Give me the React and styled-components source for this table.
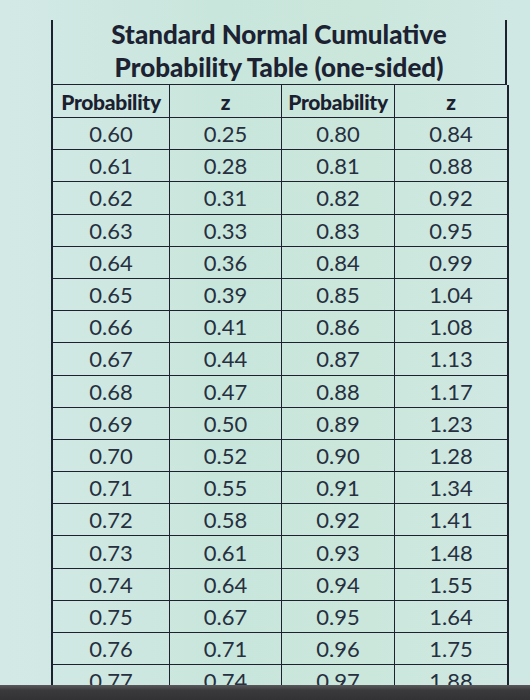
import React from "react";
import styled, { createGlobalStyle } from "styled-components";

const Global = createGlobalStyle`
  html, body { margin: 0; padding: 0; }
  body {
    background: #cbe6df;
    font-family: Lato, "Open Sans", sans-serif;
    color: #1d2535;
  }
`;

const Screen = styled.div`
  width: 530px;
  height: 700px;
  display: flex;
  flex-direction: column;
  background: linear-gradient(90deg, #d3e9e6 0%, #c9e6dc 40%, #cbe7dc 70%, #d0e8e4 100%);
`;

const Viewport = styled.div`
  height: 685px;
  overflow: hidden;
  padding: 20px 0 0 51px;
  box-sizing: border-box;
`;

const Sheet = styled.div`
  width: 456px;
`;

const Title = styled.div`
  border-left: 2px solid #1e2230;
  border-right: 2px solid #1e2230;
  height: 64px;
  display: flex;
  flex-direction: column;
  align-items: center;
  justify-content: center;
  font-weight: 900;
  font-size: 26px;
  line-height: 33px;
  color: #1c2232;
  padding-bottom: 2px;
  box-sizing: border-box;
  white-space: nowrap;
`;

const Grid = styled.div`
  display: grid;
  grid-template-columns: 117px 112px 113px 114px;
  border-top: 1.5px solid #1e2230;
  border-left: 2px solid #1e2230;
`;

const Cell = styled.div`
  height: ${(p) => (p.$head ? "33px" : "32.2px")};
  box-sizing: border-box;
  border-right: ${(p) => (p.$last ? "2px" : "1.5px")} solid #1e2230;
  border-bottom: 1.5px solid #1e2230;
  display: flex;
  align-items: center;
  justify-content: center;
  font-size: ${(p) => (p.$head ? "21px" : "22px")};
  font-weight: ${(p) => (p.$head ? 900 : 400)};
  color: ${(p) => (p.$head ? "#1a2030" : "#263040")};
  white-space: nowrap;
  overflow: visible;
  letter-spacing: ${(p) => (p.$head ? "-0.3px" : "0")};
`;

const Band = styled.div`
  height: 15px;
  background: linear-gradient(180deg, #5a5a5c 0%, #3a3a3c 35%, #323234 100%);
`;

const rows = [
  ["0.60", "0.25", "0.80", "0.84"],
  ["0.61", "0.28", "0.81", "0.88"],
  ["0.62", "0.31", "0.82", "0.92"],
  ["0.63", "0.33", "0.83", "0.95"],
  ["0.64", "0.36", "0.84", "0.99"],
  ["0.65", "0.39", "0.85", "1.04"],
  ["0.66", "0.41", "0.86", "1.08"],
  ["0.67", "0.44", "0.87", "1.13"],
  ["0.68", "0.47", "0.88", "1.17"],
  ["0.69", "0.50", "0.89", "1.23"],
  ["0.70", "0.52", "0.90", "1.28"],
  ["0.71", "0.55", "0.91", "1.34"],
  ["0.72", "0.58", "0.92", "1.41"],
  ["0.73", "0.61", "0.93", "1.48"],
  ["0.74", "0.64", "0.94", "1.55"],
  ["0.75", "0.67", "0.95", "1.64"],
  ["0.76", "0.71", "0.96", "1.75"],
  ["0.77", "0.74", "0.97", "1.88"],
];

const heads = ["Probability", "z", "Probability", "z"];

export default function App() {
  return (
    <>
      <Global />
      <Screen>
        <Viewport>
          <Sheet>
            <Title>
              <div>Standard Normal Cumulative</div>
              <div>Probability Table (one-sided)</div>
            </Title>
            <Grid>
              {heads.map((h, i) => (
                <Cell key={"h" + i} $head $last={i === 3}>
                  {h}
                </Cell>
              ))}
              {rows.map((r, ri) =>
                r.map((v, ci) => (
                  <Cell key={ri + "-" + ci} $last={ci === 3}>
                    {v}
                  </Cell>
                ))
              )}
            </Grid>
          </Sheet>
        </Viewport>
        <Band />
      </Screen>
    </>
  );
}
